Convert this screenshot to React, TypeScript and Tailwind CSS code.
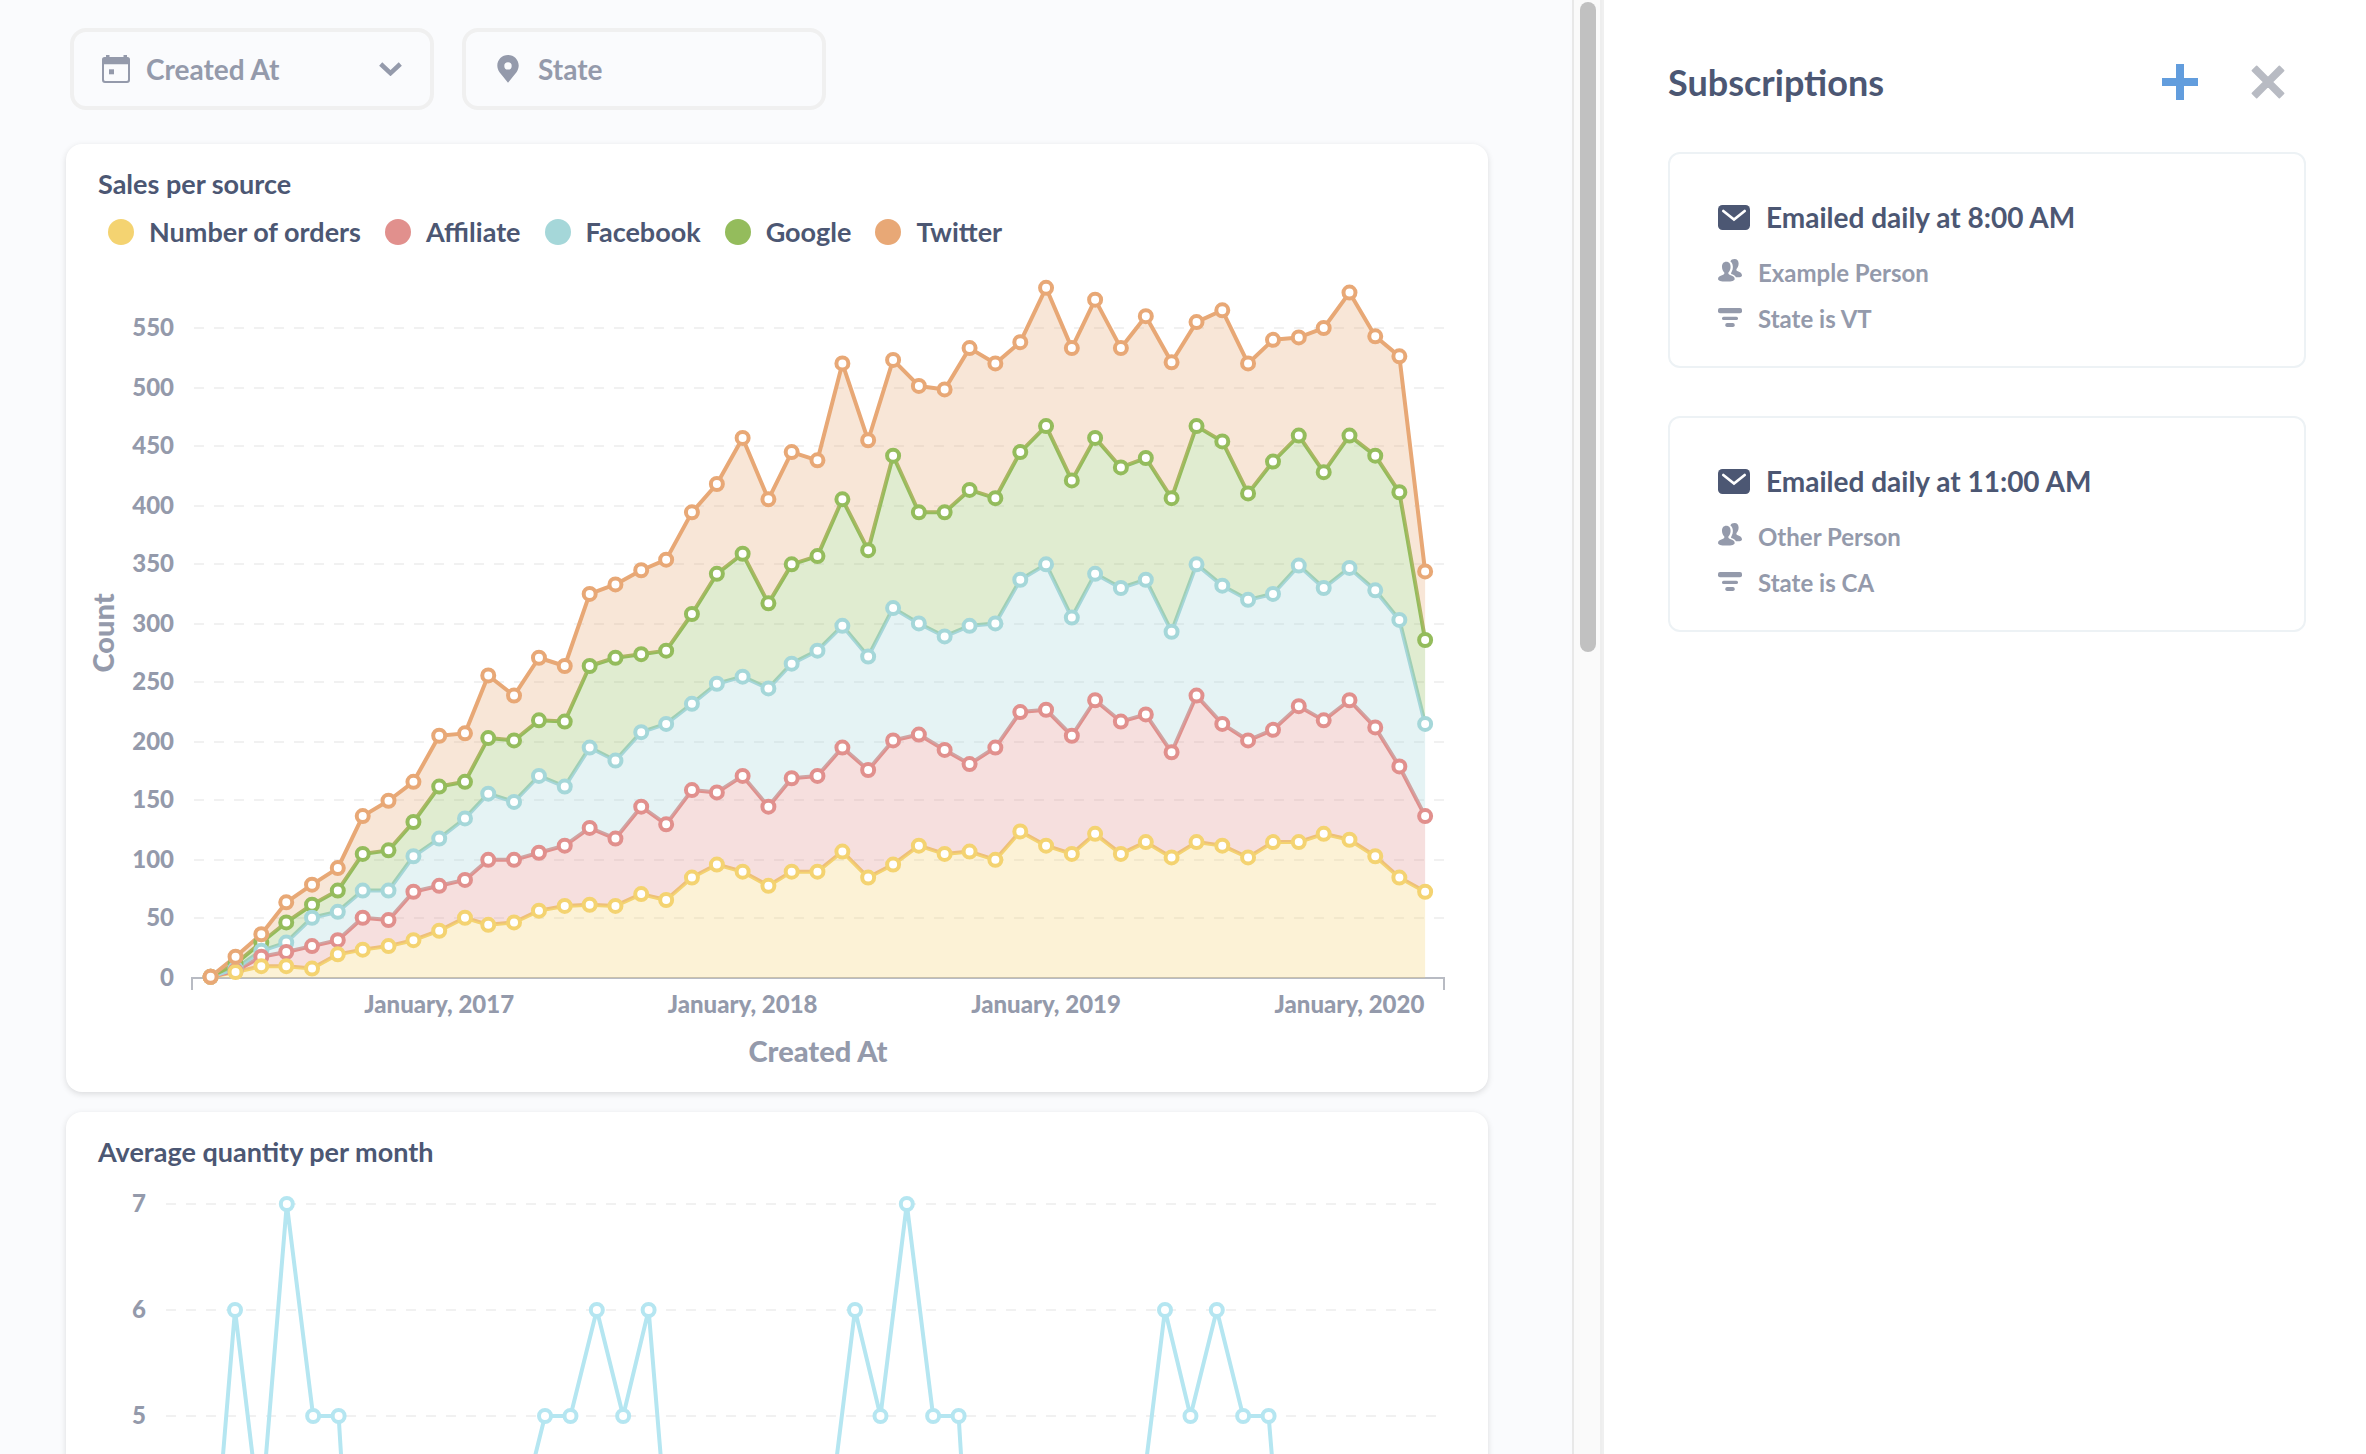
import React from "react";

type Series = { name: string; color: string; values: number[] };

const ORDERS: Series = {
  name: "Number of orders",
  color: "#f4d371",
  values: [1, 5, 10, 10, 8, 20, 24, 27, 32, 40, 51, 45, 47, 57, 61, 62, 61, 71, 66, 85, 96, 90, 78, 90, 90, 107, 85, 96, 112, 105, 107, 100, 124, 112, 105, 122, 105, 115, 102, 115, 112, 102, 115, 115, 122, 117, 103, 85, 73],
};
const AFFILIATE: Series = {
  name: "Affiliate",
  color: "#e1908d",
  values: [1, 6, 18, 22, 27, 32, 51, 49, 73, 78, 83, 100, 100, 106, 112, 127, 118, 145, 130, 159, 157, 171, 145, 169, 171, 195, 176, 201, 206, 193, 181, 195, 225, 227, 205, 235, 217, 223, 191, 239, 215, 201, 210, 230, 218, 235, 212, 179, 137],
};
const FACEBOOK: Series = {
  name: "Facebook",
  color: "#a5d7d9",
  values: [1, 8, 23, 30, 51, 56, 74, 74, 103, 118, 135, 156, 149, 171, 162, 195, 184, 208, 215, 232, 249, 255, 245, 266, 277, 298, 272, 313, 300, 289, 298, 300, 337, 350, 305, 342, 330, 337, 293, 350, 332, 320, 325, 349, 330, 347, 328, 303, 215],
};
const GOOGLE: Series = {
  name: "Google",
  color: "#94bc5c",
  values: [1, 12, 30, 47, 62, 74, 105, 108, 132, 162, 166, 203, 201, 218, 217, 264, 271, 274, 277, 308, 342, 359, 317, 350, 357, 405, 362, 442, 394, 394, 413, 406, 445, 467, 421, 457, 432, 440, 406, 467, 454, 410, 437, 459, 428, 459, 442, 411, 286],
};
const TWITTER: Series = {
  name: "Twitter",
  color: "#e8a876",
  values: [1, 18, 37, 64, 79, 93, 137, 150, 166, 205, 207, 256, 239, 271, 264, 325, 333, 345, 354, 394, 418, 457, 405, 445, 438, 520, 455, 523, 501, 498, 533, 520, 538, 584, 533, 574, 533, 560, 521, 555, 565, 520, 540, 542, 550, 580, 543, 526, 344],
};

const SERIES = [ORDERS, AFFILIATE, FACEBOOK, GOOGLE, TWITTER];
const DOT_ORDER = [GOOGLE, FACEBOOK, AFFILIATE, ORDERS, TWITTER];

/* Days between April 1, 2016 and the first day of the n-th month after it. */
function daysSinceStart(month: number) {
  return Math.round((Date.UTC(2016, 3 + month, 1) - Date.UTC(2016, 3, 1)) / 86400000);
}

const salesX = (month: number) => 210.6 + daysSinceStart(month) * 0.8313;
const tickY = (v: number) => 978 - Math.round((v * 1.1818) / 2) * 2;
const salesY = (v: number) => 978 - v * 1.1818;

function SalesChart() {
  const ticks = [0, 50, 100, 150, 200, 250, 300, 350, 400, 450, 500, 550];
  const zero = ORDERS.values.map(() => 0);
  const line = (values: number[]) => values.map((v, i) => `${salesX(i)},${salesY(v)}`);
  return (
    <svg viewBox="66 260 1422 832" className="block w-full" role="img" aria-label="Sales per source by month">
      {ticks.slice(1).map((t) => (
        <line key={t} x1={194} x2={1444} y1={tickY(t)} y2={tickY(t)} stroke="#f1f1f1" strokeWidth={2} strokeDasharray="10 10" />
      ))}
      <path d="M192 990V978H1444V990" fill="none" stroke="#b8bbc3" strokeWidth={2} />
      {SERIES.map((s, i) => {
        const lower = i === 0 ? zero : SERIES[i - 1].values;
        return (
          <g key={s.name}>
            <polyline points={line(s.values).join(" ")} fill="none" stroke={s.color} strokeWidth={4} strokeLinejoin="round" />
            <polygon points={[...line(s.values), ...line(lower).reverse()].join(" ")} fill={s.color} fillOpacity={0.29} />
          </g>
        );
      })}
      {DOT_ORDER.map((s) => (
        <g key={s.name} fill="#fff" stroke={s.color} strokeWidth={4}>
          {s.values.map((v, i) => (
            <circle key={i} cx={salesX(i)} cy={salesY(v)} r={6} />
          ))}
        </g>
      ))}
      <g className="fill-[#949aab] text-[24px] font-black">
        {ticks.map((t) => (
          <text key={t} x={174} y={tickY(t) + 8} textAnchor="end">
            {t}
          </text>
        ))}
        {[9, 21, 33, 45].map((m, i) => (
          <text key={m} x={salesX(m)} y={1013} textAnchor="middle">
            January, {2017 + i}
          </text>
        ))}
      </g>
      <g className="fill-[#949aab] text-[29px] font-black">
        <text x={818} y={1062} textAnchor="middle">
          Created At
        </text>
        <text transform="translate(114 633) rotate(-90)" textAnchor="middle">
          Count
        </text>
      </g>
    </svg>
  );
}

const QUANTITY = [4, 3, 6, 4, 7, 5, 5, 1, 4, 3, 4, 4, 3, 4, 5, 5, 6, 5, 6, 3, 4, 4, 3, 4, 3, 4, 6, 5, 7, 5, 5, 1, 4, 3, 4, 4, 3, 4, 6, 5, 6, 5, 5, 2, 4, 3, 4, 3, 4];

function QuantityChart() {
  const x = (month: number) => 183.2 + daysSinceStart(month) * 0.8493;
  const y = (v: number) => 1204 + (7 - v) * 106;
  return (
    <svg viewBox="66 1168 1422 600" className="block w-full" role="img" aria-label="Average quantity per month">
      {[7, 6, 5].map((t) => (
        <g key={t}>
          <line x1={166} x2={1436} y1={y(t)} y2={y(t)} stroke="#f1f1f1" strokeWidth={2} strokeDasharray="10 10" />
          <text x={146} y={y(t) + 8} textAnchor="end" className="fill-[#949aab] text-[24px] font-black">
            {t}
          </text>
        </g>
      ))}
      <polyline points={QUANTITY.map((v, i) => `${x(i)},${y(v)}`).join(" ")} fill="none" stroke="#b5e6f1" strokeWidth={4} strokeLinejoin="round" />
      {QUANTITY.map((v, i) => (
        <circle key={i} cx={x(i)} cy={y(v)} r={6} fill="#fff" stroke="#b5e6f1" strokeWidth={4} />
      ))}
    </svg>
  );
}

function CalendarIcon() {
  return (
    <svg viewBox="0 0 28 28" className="size-7" fill="currentColor" aria-hidden="true">
      <path fillRule="evenodd" d="M4 0h3.500v2h14V0H25v2h.5A2.500 2.500 0 0 1 28 4.500V25a3 3 0 0 1-3 3H3a3 3 0 0 1-3-3V4.500A2.500 2.500 0 0 1 2.500 2H4zM2 9.300V24.500A1.500 1.500 0 0 0 3.500 26h21a1.500 1.500 0 0 0 1.500-1.500V9.300z" />
      <path d="M7 14.300h5v5H7z" />
    </svg>
  );
}

function PinIcon() {
  return (
    <svg viewBox="0 0 28 28" className="size-7" fill="currentColor" aria-hidden="true">
      <path fillRule="evenodd" d="M14 0C8 0 3.300 4.700 3.300 10.500c0 2.500.9 4.700 2.200 6.800L14 27.700l8.500-10.400c1.300-2.100 2.200-4.300 2.200-6.800C24.700 4.700 20 0 14 0zm0 7.200a3.700 3.700 0 1 1 0 7.400 3.700 3.700 0 0 1 0-7.400z" />
    </svg>
  );
}

function ChevronIcon() {
  return (
    <svg viewBox="0 0 23 14" className="ml-auto h-3.5 w-[23px]" aria-hidden="true">
      <path d="M1.700 2L11.500 11.200L21.300 2" fill="none" stroke="currentColor" strokeWidth={4.5} />
    </svg>
  );
}

function MailIcon() {
  return (
    <svg viewBox="0 0 32 25" className="h-[25px] w-8" aria-hidden="true">
      <rect width={32} height={25} rx={4.5} fill="currentColor" />
      <path d="M5.300 6L16 14.600L26.700 6" fill="none" stroke="#fff" strokeWidth={2.7} strokeLinecap="round" />
    </svg>
  );
}

function PeopleIcon() {
  return (
    <svg viewBox="0 0 24 24" className="size-6" fill="currentColor" aria-hidden="true">
      <path d="M16.500 0c2.800 0 4.200 1.900 4.100 4.800-.1 2.400-1 4.100-2.100 5.200-.3 1.200.1 1.700 1.300 2.200 2.400.9 4.200 1.900 4.200 4.200 0 .9-.8 1.500-2.500 1.800-1.300.2-2.300.1-3.500 0-.8-1.500-2.500-2.600-4.800-3.300-.3-.8.1-1.500.6-2.300.9-1.600 1.200-3.500 1-5.700-.2-2.200-1.100-3.500-2.400-4.500.7-1.600 2.100-2.400 4.100-2.400z" />
      <path d="M8.300 2.800c2.900 0 4.400 2.200 4.300 5.300-.1 2.500-1 4.300-2.200 5.500-.3 1.300.2 1.900 1.700 2.400 2.700.8 4.600 1.700 4.600 3.900 0 1.600-2.600 2.600-8.300 2.600S0 21.500 0 19.900c0-2.200 1.900-3.100 4.600-3.900 1.500-.5 2-1.100 1.700-2.400C5.100 12.400 4.100 10.600 4 8.100 3.900 5 5.400 2.800 8.300 2.800z" />
    </svg>
  );
}

function FilterIcon() {
  return (
    <svg viewBox="0 0 24 24" className="size-6" fill="currentColor" aria-hidden="true">
      <rect x={0} y={3} width={24} height={5.2} rx={2} />
      <rect x={4} y={11.7} width={16} height={3.4} rx={1.6} />
      <rect x={7.3} y={18} width={9.4} height={4} rx={1.8} />
    </svg>
  );
}

function FilterButton({ icon, label, chevron }: { icon: React.ReactNode; label: string; chevron?: boolean }) {
  return (
    <button type="button" className="flex h-[82px] w-[364px] items-center gap-4 rounded-2xl border-4 border-[#f0f0f0] px-7 text-[28px] text-[#949aab]">
      {icon}
      <span>{label}</span>
      {chevron && <ChevronIcon />}
    </button>
  );
}

function Card({ title, children }: { title: string; children: React.ReactNode }) {
  return (
    <section className="rounded-2xl bg-white pt-6 shadow-[0_2px_6px_rgba(0,0,0,0.13)]">
      <h2 className="px-8 text-[27px] leading-8">{title}</h2>
      {children}
    </section>
  );
}

function Subscription({ title, person, filter }: { title: string; person: string; filter: string }) {
  return (
    <li>
      <button type="button" className="block w-full rounded-xl border-2 border-[#edf2f5] px-12 pt-[45px] pb-[33px] text-left">
        <span className="flex items-center gap-4 text-[28px] leading-9">
          <MailIcon />
          {title}
        </span>
        <span className="mt-6 flex items-start gap-4 text-2xl leading-7 text-[#949aab]">
          <PeopleIcon />
          {person}
        </span>
        <span className="mt-[18px] flex items-start gap-4 text-2xl leading-7 text-[#949aab]">
          <FilterIcon />
          {filter}
        </span>
      </button>
    </li>
  );
}

export default function App() {
  return (
    <div className="flex h-screen overflow-hidden bg-white font-['Lato',sans-serif] font-bold text-[#4c5773]">
      <main className="min-w-0 flex-1 overflow-hidden bg-[#fafbfd] pt-7 pr-[84px] pl-[66px]">
        <div className="flex gap-7 pl-1">
          <FilterButton icon={<CalendarIcon />} label="Created At" chevron />
          <FilterButton icon={<PinIcon />} label="State" />
        </div>
        <div className="mt-[34px] flex flex-col gap-5">
          <Card title="Sales per source">
            <ul className="mt-4 mb-3 flex gap-6 pl-[42px] text-[27px] leading-8">
              {SERIES.map((s) => (
                <li key={s.name} className="flex items-center gap-[15px]">
                  <span className="size-[26px] rounded-full" style={{ backgroundColor: s.color }} />
                  {s.name}
                </li>
              ))}
            </ul>
            <SalesChart />
          </Card>
          <Card title="Average quantity per month">
            <QuantityChart />
          </Card>
        </div>
      </main>
      <div className="w-[30px] shrink-0 border-x-2 border-l-[#e8e8e8] border-r-[#eeeeee] bg-[#fafafa] pt-0.5 pl-1.5">
        <div className="h-[650px] w-4 rounded-full bg-[#c1c1c1]" />
      </div>
      <aside className="w-[764px] shrink-0 border-l-2 border-[#f0f0f0] pt-[60px] pr-[60px] pl-16">
        <header className="mb-12 flex h-11 items-center pr-[21px]">
          <h1 className="flex-1 text-4xl leading-[44px]">Subscriptions</h1>
          <button type="button" aria-label="Add subscription" className="mr-[53px] text-[#629ddd]">
            <svg viewBox="0 0 36 36" className="size-9" fill="currentColor" aria-hidden="true">
              <path d="M14 0h8v14h14v8H22v14h-8V22H0v-8h14z" />
            </svg>
          </button>
          <button type="button" aria-label="Close" className="text-[#b8bbc3]">
            <svg viewBox="4 4 24 24" className="size-[34px]" fill="currentColor" stroke="currentColor" strokeLinejoin="round" aria-hidden="true">
              <path d="M5 8L8 5L16 13L24 5L27 8L19 16L27 24L24 27L16 19L8 27L5 24L13 16z" strokeWidth={1.2} />
            </svg>
          </button>
        </header>
        <ul className="flex flex-col gap-12">
          <Subscription title="Emailed daily at 8:00 AM" person="Example Person" filter="State is VT" />
          <Subscription title="Emailed daily at 11:00 AM" person="Other Person" filter="State is CA" />
        </ul>
      </aside>
    </div>
  );
}
